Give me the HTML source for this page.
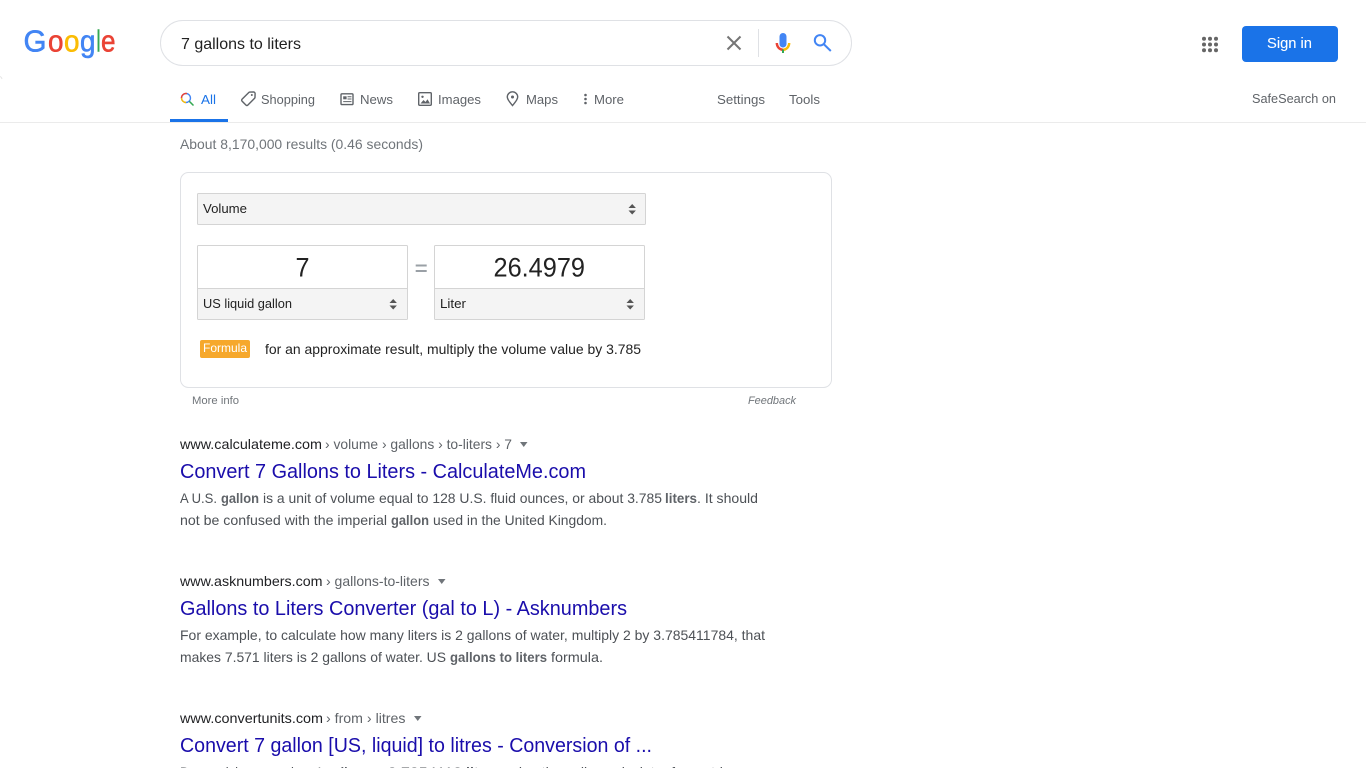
<!DOCTYPE html>
<html lang="en">
<head>
<meta charset="utf-8">
<title>7 gallons to liters - Google Search</title>
<style>
html,body{margin:0;padding:0;width:1366px;height:768px;overflow:hidden;background:#fff}
svg{position:absolute;left:0;top:0;display:block}
text{font-family:"Liberation Sans",Arial,sans-serif;white-space:pre}
.tab{font-size:13px;fill:#5f6368}
.snip{font-size:14px;fill:#4d5156}
.snip-b{font-size:14px;fill:#5f6368;font-weight:bold}
.cite{font-size:14px;fill:#202124}
.path{font-size:14px;fill:#5f6368}
.title{font-size:20px;fill:#1a0dab}
.sel{font-size:13px;fill:#222}
.big{font-size:26.500px;fill:#222}
.logo{font-size:31px;stroke-width:.6px}
</style>
</head>
<body>
<svg width="1366" height="768" viewBox="0 0 1366 768" xmlns="http://www.w3.org/2000/svg">
<!-- corner mark -->
<path d="M0 76.500q1.600.6 2 2.500" fill="none" stroke="#e6e6e6" stroke-width="1"/>

<!-- logo -->
<text class="logo" x="23.500" y="51.500" fill="#4285f4" stroke="#4285f4" textLength="23" lengthAdjust="spacingAndGlyphs">G</text>
<text class="logo" x="48" y="51.500" fill="#ea4335" stroke="#ea4335" textLength="15.500" lengthAdjust="spacingAndGlyphs">o</text>
<text class="logo" x="64" y="51.500" fill="#fbbc05" stroke="#fbbc05" textLength="15.500" lengthAdjust="spacingAndGlyphs">o</text>
<text class="logo" x="80" y="51.500" fill="#4285f4" stroke="#4285f4" textLength="15.500" lengthAdjust="spacingAndGlyphs">g</text>
<text class="logo" x="96.500" y="51.500" fill="#34a853" stroke="#34a853" textLength="4" lengthAdjust="spacingAndGlyphs">l</text>
<text class="logo" x="101" y="51.500" fill="#ea4335" stroke="#ea4335" textLength="14.500" lengthAdjust="spacingAndGlyphs">e</text>

<!-- search box -->
<rect x="160.500" y="20.500" width="691" height="45" rx="22.500" fill="#fff" stroke="#dfe1e5"/>
<text x="181" y="49" font-size="16" fill="#222" textLength="120" lengthAdjust="spacingAndGlyphs">7 gallons to liters</text>
<path d="M727.500 36.500l13 13m0-13l-13 13" stroke="#757575" stroke-width="2" fill="none"/>
<rect x="758" y="29" width="1" height="28" fill="#dfe1e5"/>
<!-- mic -->
<rect x="779.500" y="33" width="7" height="14.500" rx="3.500" fill="#4285f4"/>
<path d="M776.800 43a6.300 6.800 0 0 0 6.200 6.800" fill="none" stroke="#ea4335" stroke-width="2.400"/>
<path d="M783 49.800a6.300 6.800 0 0 0 6.200-6.800" fill="none" stroke="#fbbc05" stroke-width="2.400"/>
<rect x="782" y="49.500" width="2" height="3.500" fill="#34a853"/>
<!-- search -->
<circle cx="820" cy="40.300" r="5.200" fill="none" stroke="#4285f4" stroke-width="2"/>
<path d="M824 44.400l6.800 6.600" stroke="#4285f4" stroke-width="2" fill="none"/>

<!-- apps grid -->
<g fill="#666">
<circle cx="1204" cy="38.700" r="2"/><circle cx="1210" cy="38.700" r="2"/><circle cx="1216" cy="38.700" r="2"/>
<circle cx="1204" cy="44.500" r="2"/><circle cx="1210" cy="44.500" r="2"/><circle cx="1216" cy="44.500" r="2"/>
<circle cx="1204" cy="50.200" r="2"/><circle cx="1210" cy="50.200" r="2"/><circle cx="1216" cy="50.200" r="2"/>
</g>
<rect x="1242" y="26" width="96" height="36" rx="4" fill="#1a73e8"/>
<text x="1267" y="48" font-size="15" fill="#fff" stroke="#fff" stroke-width=".1" textLength="45" lengthAdjust="spacingAndGlyphs">Sign in</text>

<!-- tabs -->
<rect x="0" y="122" width="1366" height="1" fill="#ebebeb"/>
<rect x="170" y="119" width="58" height="3" fill="#1a73e8"/>
<circle cx="186" cy="98" r="4.500" fill="none" stroke="#4285f4" stroke-width="1.400"/>
<path d="M181.500 98a4.500 4.500 0 0 1 5.500-4.400" fill="none" stroke="#ea4335" stroke-width="1.400"/>
<path d="M181.500 98a4.500 4.500 0 0 0 4.500 4.500" fill="none" stroke="#fbbc05" stroke-width="1.400"/>
<path d="M189.300 101.300l4.200 4.200" stroke="#34a853" stroke-width="1.500" fill="none"/>
<text class="tab" x="201" y="104" style="fill:#1a73e8" textLength="15" lengthAdjust="spacingAndGlyphs">All</text>

<path d="M242 99.300l6.800-6.800a1.500 1.500 0 0 1 1-.4l3.800-.1a1.500 1.500 0 0 1 1.500 1.500l-.1 3.800a1.500 1.500 0 0 1-.4 1l-6.800 6.800a1.300 1.300 0 0 1-1.800 0l-3.900-3.900a1.300 1.300 0 0 1-.1-1.900z" fill="none" stroke="#5f6368" stroke-width="1.400"/>
<circle cx="251.800" cy="95" r="1" fill="#5f6368"/>
<text class="tab" x="261" y="104" textLength="54" lengthAdjust="spacingAndGlyphs">Shopping</text>

<rect x="341" y="93.800" width="12" height="10.800" rx="1" fill="none" stroke="#5f6368" stroke-width="1.400"/>
<path d="M343.200 96.300h3.400v3h-3.400z" fill="#5f6368"/>
<path d="M347.500 96.700h4M347.500 99h4M343.200 101.600h8.300" fill="none" stroke="#5f6368"/>
<text class="tab" x="360" y="104" textLength="33" lengthAdjust="spacingAndGlyphs">News</text>

<rect x="418.700" y="92.700" width="12.600" height="12.600" rx="1" fill="none" stroke="#5f6368" stroke-width="1.400"/>
<circle cx="422.500" cy="96.800" r="1.200" fill="#5f6368"/>
<path d="M420.500 103.500l3-3.500 2 2 2-2.700 2.500 4.200z" fill="#5f6368"/>
<text class="tab" x="438" y="104" textLength="43" lengthAdjust="spacingAndGlyphs">Images</text>

<path d="M512.500 105.500c-2.500-3-5.200-5.800-5.200-8.500a5.200 5.200 0 0 1 10.400 0c0 2.700-2.700 5.500-5.200 8.500z" fill="none" stroke="#5f6368" stroke-width="1.400"/>
<circle cx="512.500" cy="97" r="1.500" fill="#5f6368"/>
<text class="tab" x="526" y="104" textLength="32" lengthAdjust="spacingAndGlyphs">Maps</text>

<g fill="#5f6368"><circle cx="585.500" cy="95" r="1.300"/><circle cx="585.500" cy="99" r="1.300"/><circle cx="585.500" cy="103" r="1.300"/></g>
<text class="tab" x="594" y="104" textLength="30" lengthAdjust="spacingAndGlyphs">More</text>

<text class="tab" x="717" y="104" textLength="48" lengthAdjust="spacingAndGlyphs">Settings</text>
<text class="tab" x="789" y="104" textLength="31" lengthAdjust="spacingAndGlyphs">Tools</text>
<text class="tab" x="1252" y="103" textLength="84" lengthAdjust="spacingAndGlyphs">SafeSearch on</text>

<text x="180" y="149" font-size="14" fill="#70757a" textLength="243" lengthAdjust="spacingAndGlyphs">About 8,170,000 results (0.46 seconds)</text>

<!-- converter card -->
<rect x="180.500" y="172.500" width="651" height="215" rx="8" fill="#fff" stroke="#dfe1e5"/>
<rect x="197.500" y="193.500" width="448" height="31" rx="1" fill="#f4f4f4" stroke="#d4d4d4"/>
<text class="sel" x="203" y="213" textLength="44" lengthAdjust="spacingAndGlyphs">Volume</text>
<path d="M628.500 208l3.700-4 3.700 4zM628.500 210.500l3.700 4 3.700-4z" fill="#555"/>

<rect x="197.500" y="245.500" width="210" height="74" rx="1" fill="#fff" stroke="#d4d4d4"/>
<rect x="198" y="288" width="209" height="31" fill="#f4f4f4"/>
<rect x="197" y="288" width="211" height="1" fill="#d4d4d4"/>
<text class="big" x="295.500" y="276.500" textLength="14" lengthAdjust="spacingAndGlyphs">7</text>
<text class="sel" x="203" y="308" textLength="89" lengthAdjust="spacingAndGlyphs">US liquid gallon</text>
<path d="M389.500 303l3.700-4 3.700 4zM389.500 305.500l3.700 4 3.700-4z" fill="#555"/>

<path d="M415.700 265.500h11M415.700 271h11" stroke="#9aa0a6" stroke-width="2" fill="none"/>

<rect x="434.500" y="245.500" width="210" height="74" rx="1" fill="#fff" stroke="#d4d4d4"/>
<rect x="435" y="288" width="209" height="31" fill="#f4f4f4"/>
<rect x="434" y="288" width="211" height="1" fill="#d4d4d4"/>
<text class="big" x="493.500" y="276.500" textLength="91.500" lengthAdjust="spacingAndGlyphs">26.4979</text>
<text class="sel" x="440" y="308" textLength="26" lengthAdjust="spacingAndGlyphs">Liter</text>
<path d="M626.500 303l3.700-4 3.700 4zM626.500 305.500l3.700 4 3.700-4z" fill="#555"/>

<rect x="200" y="340" width="50" height="18" rx="2" fill="#f6a82c"/>
<text x="203" y="352" font-size="12" fill="#fff" textLength="44" lengthAdjust="spacingAndGlyphs">Formula</text>
<text x="265" y="354" font-size="14" fill="#222" textLength="376" lengthAdjust="spacingAndGlyphs">for an approximate result, multiply the volume value by 3.785</text>

<text x="192" y="404" font-size="11" fill="#70757a" textLength="47" lengthAdjust="spacingAndGlyphs">More info</text>
<text x="748" y="404" font-size="11" font-style="italic" fill="#70757a" textLength="48" lengthAdjust="spacingAndGlyphs">Feedback</text>

<!-- result 1 -->
<text class="cite" x="180" y="449" textLength="142" lengthAdjust="spacingAndGlyphs">www.calculateme.com</text>
<text class="path" x="325" y="449" textLength="187" lengthAdjust="spacingAndGlyphs">› volume › gallons › to-liters › 7</text>
<path d="M520 442h7.500l-3.750 5z" fill="#70757a"/>
<text class="title" x="180" y="478" textLength="406" lengthAdjust="spacingAndGlyphs">Convert 7 Gallons to Liters - CalculateMe.com</text>
<text class="snip" x="180" y="503" textLength="37" lengthAdjust="spacingAndGlyphs">A U.S.</text>
<text class="snip-b" x="221" y="503" textLength="38" lengthAdjust="spacingAndGlyphs">gallon</text>
<text class="snip" x="263" y="503" textLength="399" lengthAdjust="spacingAndGlyphs">is a unit of volume equal to 128 U.S. fluid ounces, or about 3.785</text>
<text class="snip-b" x="665" y="503" textLength="32" lengthAdjust="spacingAndGlyphs">liters</text>
<text class="snip" x="697" y="503" textLength="61" lengthAdjust="spacingAndGlyphs">. It should</text>
<text class="snip" x="180" y="525" textLength="207" lengthAdjust="spacingAndGlyphs">not be confused with the imperial</text>
<text class="snip-b" x="391" y="525" textLength="38" lengthAdjust="spacingAndGlyphs">gallon</text>
<text class="snip" x="433" y="525" textLength="174" lengthAdjust="spacingAndGlyphs">used in the United Kingdom.</text>

<!-- result 2 -->
<text class="cite" x="180" y="586" textLength="142.500" lengthAdjust="spacingAndGlyphs">www.asknumbers.com</text>
<text class="path" x="326" y="586" textLength="103.500" lengthAdjust="spacingAndGlyphs">› gallons-to-liters</text>
<path d="M438 579h7.500l-3.750 5z" fill="#70757a"/>
<text class="title" x="180" y="615" textLength="447" lengthAdjust="spacingAndGlyphs">Gallons to Liters Converter (gal to L) - Asknumbers</text>
<text class="snip" x="180" y="640" textLength="585" lengthAdjust="spacingAndGlyphs">For example, to calculate how many liters is 2 gallons of water, multiply 2 by 3.785411784, that</text>
<text class="snip" x="180" y="662" textLength="266" lengthAdjust="spacingAndGlyphs">makes 7.571 liters is 2 gallons of water. US</text>
<text class="snip-b" x="450" y="662" textLength="97" lengthAdjust="spacingAndGlyphs">gallons to liters</text>
<text class="snip" x="551" y="662" textLength="52" lengthAdjust="spacingAndGlyphs">formula.</text>

<!-- result 3 -->
<text class="cite" x="180" y="723" textLength="143" lengthAdjust="spacingAndGlyphs">www.convertunits.com</text>
<text class="path" x="326" y="723" textLength="79.500" lengthAdjust="spacingAndGlyphs">› from › litres</text>
<path d="M414 716h7.500l-3.750 5z" fill="#70757a"/>
<text class="title" x="180" y="752" textLength="472" lengthAdjust="spacingAndGlyphs">Convert 7 gallon [US, liquid] to litres - Conversion of ...</text>
<text class="snip" x="180" y="777" textLength="143" lengthAdjust="spacingAndGlyphs">Do a quick conversion: 1</text>
<text class="snip-b" x="326" y="777" textLength="44" lengthAdjust="spacingAndGlyphs">gallons</text>
<text class="snip" x="374" y="777" textLength="88" lengthAdjust="spacingAndGlyphs">= 3.7854118</text>
<text class="snip-b" x="466" y="777" textLength="34" lengthAdjust="spacingAndGlyphs">litres</text>
<text class="snip" x="504" y="777" textLength="226" lengthAdjust="spacingAndGlyphs">using the online calculator for metric</text>
</svg>
</body>
</html>
